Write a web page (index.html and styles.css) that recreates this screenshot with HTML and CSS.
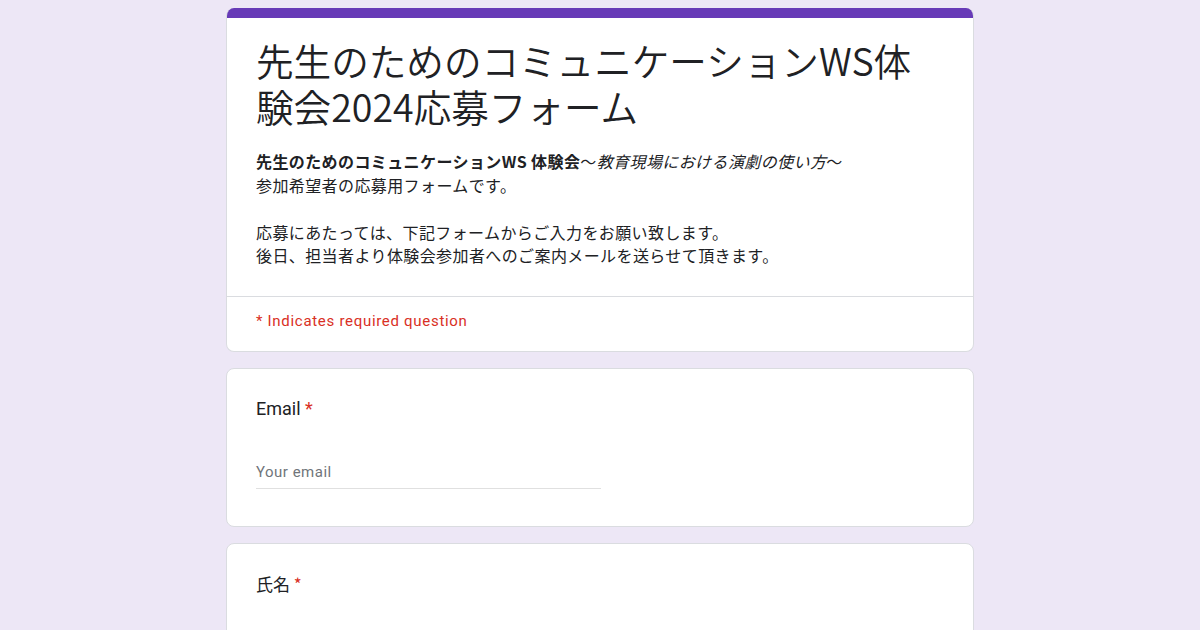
FILE: index.html
```html
<!DOCTYPE html>
<html lang="ja">
<head>
<meta charset="utf-8">
<title>先生のためのコミュニケーションWS体験会2024応募フォーム</title>
<link rel="stylesheet" href="styles.css">
</head>
<body>
<main class="form">
  <section class="card header-card">
    <div class="bar"></div>
    <div class="header-body">
      <h1 class="title">先生のためのコミュニケーションWS体験会2024応募フォーム</h1>
      <div class="desc">
        <div><b>先生のためのコミュニケーションWS 体験会</b>〜<i>教育現場における演劇の使い方</i>〜</div>
        <div>参加希望者の応募用フォームです。</div>
        <div>&nbsp;</div>
        <div>応募にあたっては、下記フォームからご入力をお願い致します。</div>
        <div>後日、担当者より体験会参加者へのご案内メールを送らせて頂きます。</div>
      </div>
    </div>
    <div class="required-note">* Indicates required question</div>
  </section>

  <section class="card question">
    <div class="q-title">Email <span class="star">*</span></div>
    <div class="input"><span class="placeholder">Your email</span></div>
  </section>

  <section class="card question">
    <div class="q-title jp">氏名 <span class="star">*</span></div>
    <div class="input"><span class="placeholder">Your answer</span></div>
  </section>
</main>
</body>
</html>
```
FILE: styles.css
```css
html, body {
  margin: 0;
  padding: 0;
  background: #ede7f6;
}
body {
  font-family: Roboto, "Noto Sans CJK JP", sans-serif;
  color: #202124;
}
.form {
  width: 748px;
  margin: 0 auto;
  padding-top: 8px;
  display: flex;
  flex-direction: column;
  gap: 16px;
}
.card {
  background: #fff;
  border: 1px solid #dadce0;
  border-radius: 8px;
  overflow: hidden;
}
.header-card {
  border-top: none;
}
.bar {
  height: 10px;
  background: #673ab7;
  margin: 0 -1px;
}
.header-body {
  padding: 19px 29px 28px;
  border-bottom: 1px solid #dadce0;
}
.title {
  margin: 0;
  font-family: "Noto Sans CJK JP", sans-serif;
  font-weight: 350;
  font-size: 37.6px;
  line-height: 46px;
  color: #202124;
}
.desc {
  margin-top: 21px;
  font-family: "Noto Sans CJK JP", sans-serif;
  font-size: 16px;
  line-height: 23.5px;
  letter-spacing: 0.4px;
  color: #202124;
}
.desc b { font-weight: 700; }
.desc i { font-style: italic; }
.required-note {
  padding: 14px 29px 20px;
  font-family: Roboto, sans-serif;
  font-size: 15px;
  line-height: 20px;
  letter-spacing: 0.7px;
  color: #d93025;
}
.question {
  padding: 28px 29px 37px;
}
.q-title {
  font-family: Roboto, "Noto Sans CJK JP", sans-serif;
  font-size: 18px;
  line-height: 24px;
  color: #202124;
}
.q-title.jp {
  font-family: "Noto Sans CJK JP", sans-serif;
  font-size: 17px;
}
.star {
  color: #d93025;
}
.input {
  margin-top: 36px;
  width: 345px;
  height: 31px;
  border-bottom: 1px solid #e0e0e0;
  display: flex;
  align-items: center;
}
.placeholder {
  font-family: Roboto, sans-serif;
  font-size: 15px;
  letter-spacing: 0.5px;
  color: #70757a;
}
```
